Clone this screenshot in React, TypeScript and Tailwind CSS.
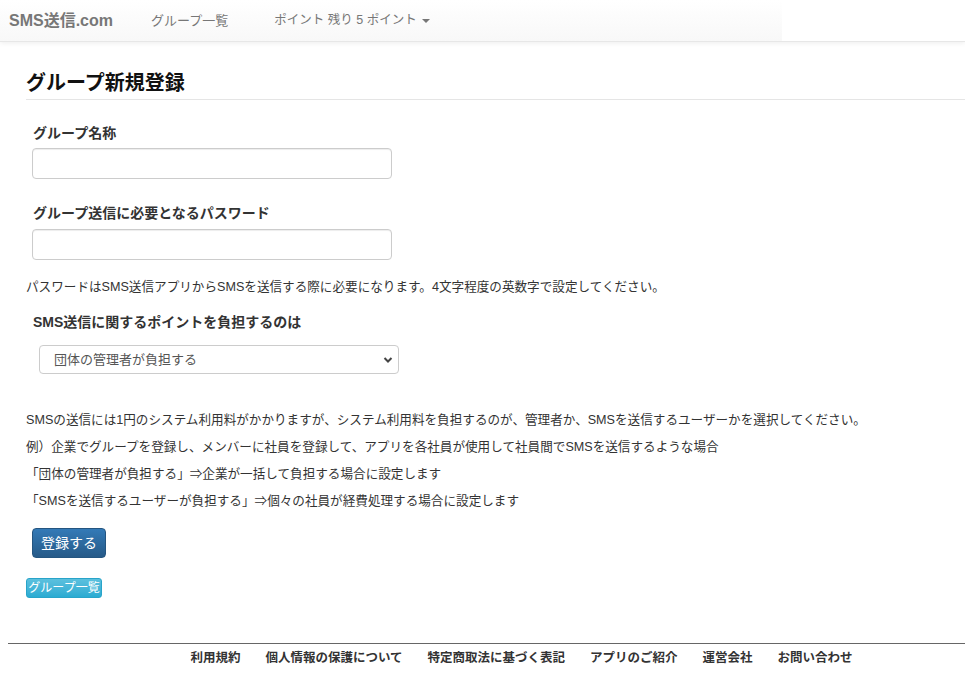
export default function App() {
  return (
    <div
      className="min-h-[682px] bg-white text-[#333]"
      style={{ fontFamily: '"Liberation Sans", "Noto Sans CJK JP", sans-serif' }}
    >
      {/* Navbar */}
      <header className="h-[42px] border-b border-[#e7e7e7] shadow-[0_1px_5px_rgba(0,0,0,0.075)]">
        <div className="flex h-[41px] w-[782px] items-center bg-gradient-to-b from-white to-[#f8f8f8] text-[#777]">
          <span className="ml-[9px] text-[16px] font-bold leading-none">SMS送信.com</span>
          <span className="ml-[38px] text-[13px] leading-none">グループ一覧</span>
          <span className="ml-[46px] flex items-center text-[12.5px] leading-none">
            ポイント 残り 5 ポイント
            <span className="ml-[5px] inline-block h-0 w-0 border-x-[4px] border-t-[4px] border-x-transparent border-t-[#777]" />
          </span>
        </div>
      </header>

      {/* Page title */}
      <div className="ml-[26px] mt-[30px] border-b border-[#e5e5e5] pb-[5px]">
        <h2 className="text-[20px] font-bold leading-[22px] text-[#111]">グループ新規登録</h2>
      </div>

      {/* Form */}
      <div className="pt-[23px]">
        <div className="ml-[33px] text-[14px] font-bold leading-[20px]">グループ名称</div>
        <input
          type="text"
          className="ml-[32px] mt-[5px] block h-[31px] w-[360px] rounded-[4px] border border-[#ccc] shadow-[inset_0_1px_1px_rgba(0,0,0,0.075)] outline-none"
        />

        <div className="ml-[33px] mt-[24px] text-[14px] font-bold leading-[20px]">
          グループ送信に必要となるパスワード
        </div>
        <input
          type="password"
          className="ml-[32px] mt-[6px] block h-[31px] w-[360px] rounded-[4px] border border-[#ccc] shadow-[inset_0_1px_1px_rgba(0,0,0,0.075)] outline-none"
        />

        <p className="ml-[26px] mt-[18px] text-[12.6px] leading-[18px]">
          パスワードはSMS送信アプリからSMSを送信する際に必要になります。4文字程度の英数字で設定してください。
        </p>

        <div className="ml-[33px] mt-[16px] text-[14px] font-bold leading-[20px]">
          SMS送信に関するポイントを負担するのは
        </div>
        <div className="relative ml-[39px] mt-[13px] h-[29px] w-[360px]">
          <select className="h-full w-full appearance-none rounded-[4px] border border-[#ccc] bg-white pl-[14px] text-[13px] text-[#555] outline-none">
            <option>団体の管理者が負担する</option>
            <option>SMSを送信するユーザーが負担する</option>
          </select>
          <svg
            className="pointer-events-none absolute right-[6px] top-[11px] h-[8px] w-[10px]"
            viewBox="0 0 10 8"
            fill="none"
          >
            <path d="M1.5 2 L5 5.5 L8.5 2" stroke="#444" strokeWidth="2" />
          </svg>
        </div>

        <div className="ml-[26px] mt-[33px] text-[12.6px] leading-[27px]">
          <p>SMSの送信には1円のシステム利用料がかかりますが、システム利用料を負担するのが、管理者か、SMSを送信するユーザーかを選択してください。</p>
          <p>例）企業でグループを登録し、メンバーに社員を登録して、アプリを各社員が使用して社員間でSMSを送信するような場合</p>
          <p>「団体の管理者が負担する」⇒企業が一括して負担する場合に設定します</p>
          <p>「SMSを送信するユーザーが負担する」⇒個々の社員が経費処理する場合に設定します</p>
        </div>

        <button className="ml-[32px] mt-[13px] flex h-[30px] w-[74px] items-center justify-center rounded-[4px] border border-[#245580] bg-gradient-to-b from-[#337ab7] to-[#265a88] text-[14px] text-white">
          登録する
        </button>

        <button className="ml-[26px] mt-[20px] flex h-[20px] w-[76px] items-center justify-center rounded-[3px] border border-[#28a4c9] bg-gradient-to-b from-[#5bc0de] to-[#2aabd2] text-[12px] text-white">
          グループ一覧
        </button>
      </div>

      {/* Footer */}
      <footer className="mt-[45px]">
        <div className="ml-[8px] border-t border-[#666]" />
        <nav className="flex justify-center gap-[25px] pl-[78px] pt-[5px] text-[12.5px] font-bold leading-[18px] text-[#333]">
          <span>利用規約</span>
          <span>個人情報の保護について</span>
          <span>特定商取法に基づく表記</span>
          <span>アプリのご紹介</span>
          <span>運営会社</span>
          <span>お問い合わせ</span>
        </nav>
      </footer>
    </div>
  );
}
